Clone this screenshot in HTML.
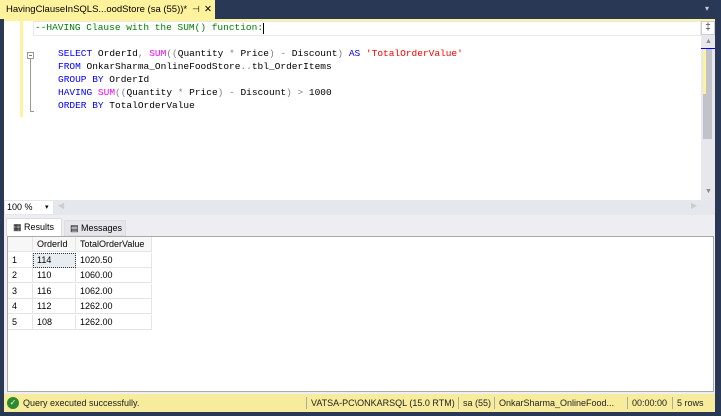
<!DOCTYPE html>
<html><head><style>
*{margin:0;padding:0;box-sizing:border-box}
body{width:721px;height:416px;background:#293955;position:relative;overflow:hidden;font-family:"Liberation Sans",sans-serif}
.abs{position:absolute}
.code{font-family:"Liberation Mono",monospace;font-size:9.5px;white-space:pre;line-height:13px}
.k{color:#0000ff}.f{color:#ff00ff}.g{color:#808080}.s{color:#ff0000}.c{color:#008000}
.grid{font-size:9px;color:#000}
.cell{position:absolute;height:15px;line-height:15px;border-right:1px solid #e4e4e4;border-bottom:1px solid #e4e4e4;padding-left:4px}
</style></head><body>
<!-- tab -->
<div class="abs" style="left:0;top:0;width:215px;height:19px;background:#fff29d;font-size:9.5px;line-height:19px;padding-left:6px;color:#000;white-space:nowrap;overflow:hidden">HavingClauseInSQLS...oodStore (sa (55))*<span style="position:absolute;left:192px;font-size:9px">⊣</span><span style="position:absolute;left:204px">✕</span></div>
<div class="abs" style="left:705px;top:4px;color:#ccd;font-size:8px">▾</div>
<div class="abs" style="left:4px;top:19px;width:711px;height:2px;background:#fff29d"></div>
<!-- editor -->
<div class="abs" style="left:4px;top:21px;width:697px;height:179px;background:#fff"></div>
<div class="abs" style="left:20px;top:21px;width:3px;height:96px;background:#fff29d"></div>
<div class="abs" style="left:27px;top:52px;width:7px;height:7px;border:1px solid #999;background:#fff"></div>
<div class="abs" style="left:29px;top:55px;width:3px;height:1px;background:#777"></div>
<div class="abs" style="left:30px;top:59px;width:1px;height:53px;background:#999"></div>
<div class="abs" style="left:30px;top:111px;width:4px;height:1px;background:#999"></div>
<div class="abs" style="left:33px;top:21px;width:668px;height:15px;border:1px solid #eaeaea"></div>
<div class="abs code c" style="left:35px;top:21px">--HAVING Clause with the SUM() function:</div>
<div class="abs" style="left:263px;top:23px;width:1px;height:11px;background:#000"></div>
<div class="abs code" style="left:58px;top:47px"><span class="k">SELECT</span> OrderId<span class="g">,</span> <span class="f">SUM</span><span class="g">((</span>Quantity <span class="g">*</span> Price<span class="g">)</span> <span class="g">-</span> Discount<span class="g">)</span> <span class="k">AS</span> <span class="s">'TotalOrderValue'</span>
<span class="k">FROM</span> OnkarSharma_OnlineFoodStore<span class="g">..</span>tbl_OrderItems
<span class="k">GROUP BY</span> OrderId
<span class="k">HAVING</span> <span class="f">SUM</span><span class="g">((</span>Quantity <span class="g">*</span> Price<span class="g">)</span> <span class="g">-</span> Discount<span class="g">)</span> <span class="g">&gt;</span> 1000
<span class="k">ORDER BY</span> TotalOrderValue</div>
<!-- scrollbar -->
<div class="abs" style="left:701px;top:21px;width:14px;height:179px;background:#e8e8ec"></div>
<div class="abs" style="left:701px;top:21px;width:14px;height:14px;background:#fff;border:1px solid #ccd;font-size:10px;line-height:12px;text-align:center;color:#333">‡</div>
<div class="abs" style="left:705px;top:38px;color:#888;font-size:7px">▲</div>
<div class="abs" style="left:701px;top:48px;width:14px;height:1px;background:#00f"></div>
<div class="abs" style="left:703px;top:49px;width:9px;height:90px;background:#c2c3c9"></div>
<div class="abs" style="left:703px;top:49px;width:3px;height:45px;background:#fff29d"></div>
<div class="abs" style="left:705px;top:188px;color:#888;font-size:7px">▼</div>
<!-- zoom bar -->
<div class="abs" style="left:4px;top:200px;width:711px;height:15px;background:#e6e7ed"></div>
<div class="abs" style="left:5px;top:201px;width:48px;height:13px;background:#fff;font-size:9px;line-height:13px;padding-left:2px">100 %<span style="position:absolute;left:40px;font-size:7px">▾</span></div>
<div class="abs" style="left:58px;top:201px;color:#ccc;font-size:8px">◀</div>
<div class="abs" style="left:691px;top:201px;color:#ccc;font-size:8px">▶</div>
<!-- results tabs -->
<div class="abs" style="left:4px;top:215px;width:711px;height:179px;background:#eeeef2"></div>
<div class="abs" style="left:6px;top:218px;width:56px;height:18px;background:#fff;border:1px solid #ddd;border-bottom:none;font-size:9px;line-height:17px;padding-left:6px">▦ Results</div>
<div class="abs" style="left:64px;top:220px;width:62px;height:16px;background:#e6e6ea;border:1px solid #ddd;font-size:9px;line-height:15px;padding-left:5px">▤ Messages</div>
<!-- grid -->
<div class="abs grid" style="left:7px;top:236px;width:707px;height:156px;background:#fff;border:1px solid #aaa">
<div class="cell" style="left:0;top:0;width:25px;background:#f7f7f7"></div>
<div class="cell" style="left:25px;top:0;width:43px;background:#f7f7f7">OrderId</div>
<div class="cell" style="left:68px;top:0;width:76px;background:#f7f7f7">TotalOrderValue</div>
<div class="cell" style="left:0;top:15.5px;width:25px">1</div><div class="cell" style="left:25px;top:15.5px;width:43px;background:#e8edf1;outline:1px dotted #333;outline-offset:-1px">114</div><div class="cell" style="left:68px;top:15.5px;width:76px">1020.50</div>
<div class="cell" style="left:0;top:31px;width:25px">2</div><div class="cell" style="left:25px;top:31px;width:43px">110</div><div class="cell" style="left:68px;top:31px;width:76px">1060.00</div>
<div class="cell" style="left:0;top:46.5px;width:25px">3</div><div class="cell" style="left:25px;top:46.5px;width:43px">116</div><div class="cell" style="left:68px;top:46.5px;width:76px">1062.00</div>
<div class="cell" style="left:0;top:62px;width:25px">4</div><div class="cell" style="left:25px;top:62px;width:43px">112</div><div class="cell" style="left:68px;top:62px;width:76px">1262.00</div>
<div class="cell" style="left:0;top:77.5px;width:25px">5</div><div class="cell" style="left:25px;top:77.5px;width:43px">108</div><div class="cell" style="left:68px;top:77.5px;width:76px">1262.00</div>
</div>
<!-- status -->
<div class="abs" style="left:4px;top:394px;width:711px;height:18px;background:#f6ec9c;font-size:9px;line-height:18px;color:#222">
<span style="position:absolute;left:3px;top:3px;width:12px;height:12px;border-radius:6px;background:#2d8a2d;color:#fff;font-size:8px;line-height:12px;text-align:center">✓</span>
<span style="position:absolute;left:19px">Query executed successfully.</span>
<span style="position:absolute;left:302px;border-left:1px solid #aaa;padding-left:4px;height:12px;top:3px;line-height:12px">VATSA-PC\ONKARSQL (15.0 RTM)</span>
<span style="position:absolute;left:454px;border-left:1px solid #aaa;padding-left:4px;height:12px;top:3px;line-height:12px">sa (55)</span>
<span style="position:absolute;left:490px;border-left:1px solid #aaa;padding-left:4px;height:12px;top:3px;line-height:12px">OnkarSharma_OnlineFood...</span>
<span style="position:absolute;left:623px;border-left:1px solid #aaa;padding-left:4px;height:12px;top:3px;line-height:12px">00:00:00</span>
<span style="position:absolute;left:668px;border-left:1px solid #aaa;padding-left:4px;height:12px;top:3px;line-height:12px">5 rows</span>
</div>
</body></html>
